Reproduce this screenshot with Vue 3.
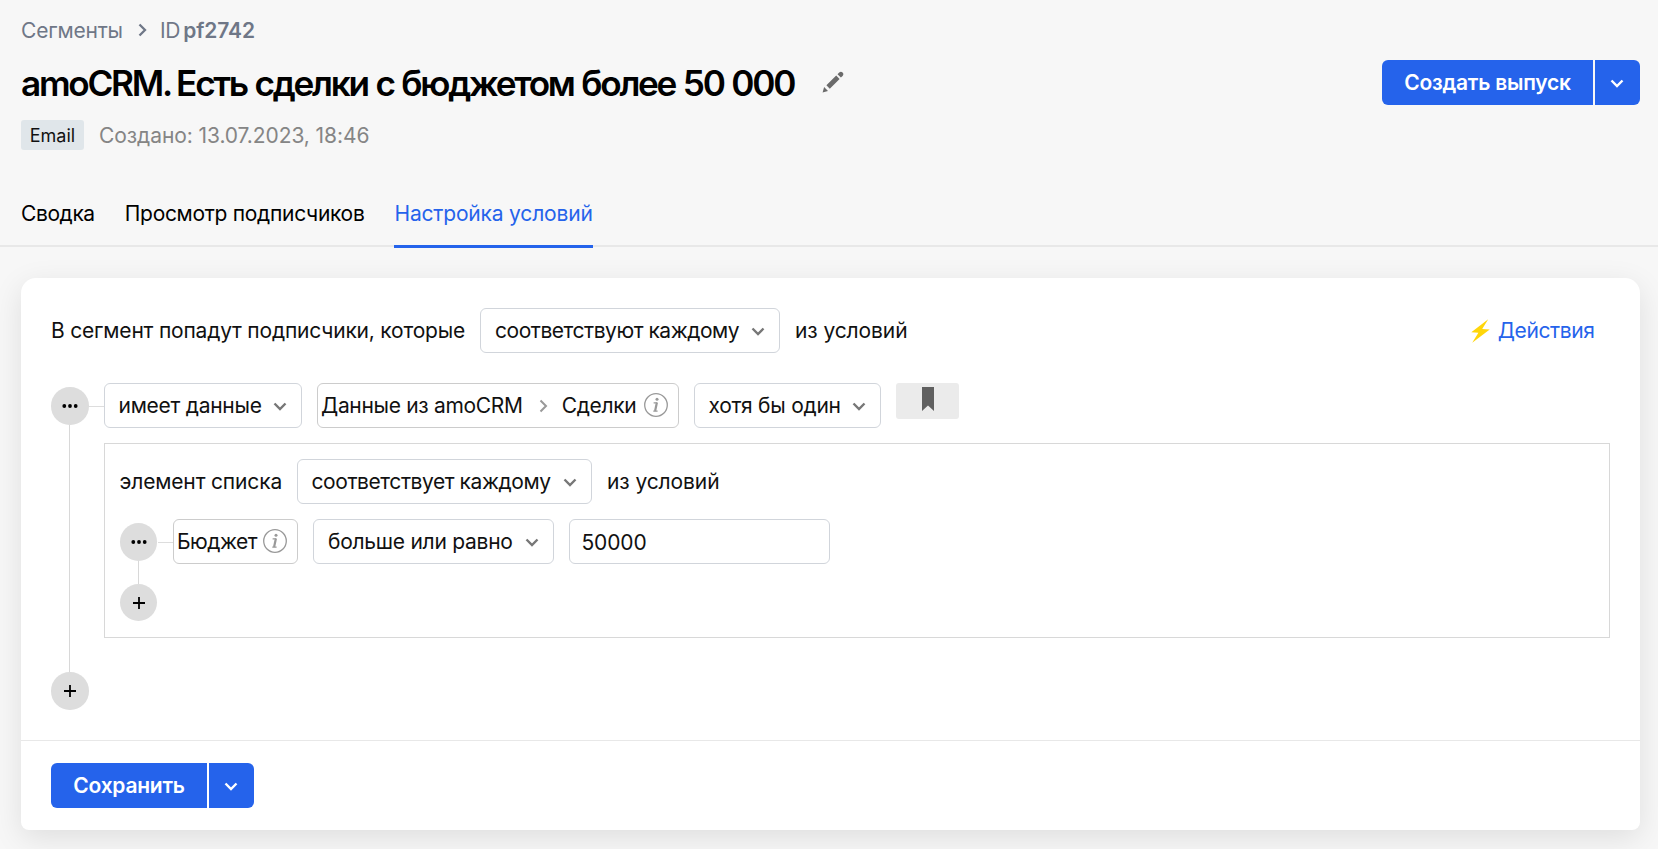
<script setup>
const tabs = [
  { label: 'Сводка', key: 'summary' },
  { label: 'Просмотр подписчиков', key: 'people' },
  { label: 'Настройка условий', key: 'active' },
]
</script>

<template>
  <div class="page">
    <header class="header">
      <div class="heading">
        <nav class="crumbs">
          <span>Сегменты</span>
          <svg class="crumb-sep" width="9" height="14" viewBox="0 0 9 14"><path d="M1.5 1.5 7 7 1.5 12.5" /></svg>
          <span class="crumb-id">ID</span><b>pf2742</b>
        </nav>
        <div class="title-row">
          <h1><span class="source">amoCRM.</span> Есть сделки с бюджетом более 50 000</h1>
          <svg class="pencil" width="22" height="22" viewBox="0 0 22 22">
            <path d="M.6 21.4 2.1 16 6 19.9ZM4.4 14.3 14.2 4.5 17.6 7.9 7.8 17.7ZM15.5 3.2 17.2 1.5Q18.9 0 20.6 1.5 22.1 3.2 20.6 4.9L18.9 6.6Z" />
          </svg>
        </div>
        <div class="meta">
          <span class="badge">Email</span>
          <span class="created">Создано: 13.07.2023, 18:46</span>
        </div>
      </div>
      <div class="split">
        <button class="main create">Создать выпуск</button>
        <button class="drop"><svg class="chev" width="14" height="9" viewBox="0 0 14 9"><path d="M1.5 1.5 7 7 12.5 1.5" /></svg></button>
      </div>
    </header>

    <nav class="tabs">
      <a v-for="t in tabs" :key="t.key" :class="['tab', t.key]">{{ t.label }}</a>
    </nav>

    <main class="card">
      <section class="body">
        <div class="row intro">
          <span class="txt t-intro">В сегмент попадут подписчики, которые</span>
          <div class="select w-match"><span>соответствуют каждому</span><svg class="chev" width="14" height="9" viewBox="0 0 14 9"><path d="M1.5 1.5 7 7 12.5 1.5" /></svg></div>
          <span class="txt">из условий</span>
          <a class="actions">
            <svg width="19" height="24" viewBox="0 0 19 24"><path d="M17.2.3.3 13.2 7.4 13.7 1.2 23.7 18.7 10.6 11.2 10.1Z" /></svg>
            <span>Действия</span>
          </a>
        </div>

        <div class="tree">
          <div class="rail">
            <span class="node"><svg width="16" height="4" viewBox="0 0 16 4"><circle cx="2.3" cy="2" r="1.9" /><circle cx="8" cy="2" r="1.9" /><circle cx="13.7" cy="2" r="1.9" /></svg></span>
            <span class="vline"></span>
            <span class="node"><svg width="12" height="12" viewBox="0 0 12 12"><path d="M0 5.1h12v1.8H0zM5.1 0h1.8v12H5.1z" /></svg></span>
          </div>
          <span class="hline"></span>
          <div class="content">
            <div class="row">
              <div class="select w-has"><span>имеет данные</span><svg class="chev" width="14" height="9" viewBox="0 0 14 9"><path d="M1.5 1.5 7 7 12.5 1.5" /></svg></div>
              <div class="path w-path">
                <span>Данные из amoCRM</span>
                <svg class="path-sep" width="9" height="14" viewBox="0 0 9 14"><path d="M1.5 1.5 7 7 1.5 12.5" /></svg>
                <span>Сделки</span>
                <svg class="info" width="24" height="24" viewBox="0 0 24 24"><circle cx="12" cy="12" r="11.3" /><path class="stem" d="M12.9 9.5 11.1 18" /><path d="M9.6 9.8H13.2M9.3 18.2H13.6" /><circle class="dot" cx="13" cy="6.3" r="1.5" /></svg>
              </div>
              <div class="select w-one"><span>хотя бы один</span><svg class="chev" width="14" height="9" viewBox="0 0 14 9"><path d="M1.5 1.5 7 7 12.5 1.5" /></svg></div>
              <button class="bookmark"><svg width="12" height="24" viewBox="0 0 12 24"><path d="M0 0H12V24L6 18.5 0 24Z" /></svg></button>
            </div>

            <div class="group">
              <div class="row">
                <span class="txt t-item">элемент списка</span>
                <div class="select w-each"><span>соответствует каждому</span><svg class="chev" width="14" height="9" viewBox="0 0 14 9"><path d="M1.5 1.5 7 7 12.5 1.5" /></svg></div>
                <span class="txt">из условий</span>
              </div>
              <div class="tree inner">
                <div class="rail">
                  <span class="node"><svg width="16" height="4" viewBox="0 0 16 4"><circle cx="2.3" cy="2" r="1.9" /><circle cx="8" cy="2" r="1.9" /><circle cx="13.7" cy="2" r="1.9" /></svg></span>
                  <span class="vline"></span>
                  <span class="node low"><svg width="12" height="12" viewBox="0 0 12 12"><path d="M0 5.1h12v1.8H0zM5.1 0h1.8v12H5.1z" /></svg></span>
                </div>
                <span class="hline"></span>
                <div class="row">
                  <div class="path w-budget">
                    <span>Бюджет</span>
                    <svg class="info" width="24" height="24" viewBox="0 0 24 24"><circle cx="12" cy="12" r="11.3" /><path class="stem" d="M12.9 9.5 11.1 18" /><path d="M9.6 9.8H13.2M9.3 18.2H13.6" /><circle class="dot" cx="13" cy="6.3" r="1.5" /></svg>
                  </div>
                  <div class="select w-gte"><span>больше или равно</span><svg class="chev" width="14" height="9" viewBox="0 0 14 9"><path d="M1.5 1.5 7 7 12.5 1.5" /></svg></div>
                  <input class="value" type="text" value="50000" />
                </div>
              </div>
            </div>
          </div>
        </div>
      </section>

      <footer class="footer">
        <div class="split">
          <button class="main save">Сохранить</button>
          <button class="drop"><svg class="chev" width="14" height="9" viewBox="0 0 14 9"><path d="M1.5 1.5 7 7 12.5 1.5" /></svg></button>
        </div>
      </footer>
    </main>
  </div>
</template>

<style>
html,
body {
  margin: 0;
  background: #f7f7f7;
}
</style>

<style scoped>
* {
  box-sizing: border-box;
}
.page {
  height: 849px;
  overflow: hidden;
  background: #f7f7f7;
  color: #111;
  font: 400 21px/30px Inter, "Liberation Sans", sans-serif;
  white-space: nowrap;
}
svg {
  display: block;
  flex: none;
}
.header {
  display: flex;
  justify-content: space-between;
  height: 186px;
  padding: 15px 18px 0 21px;
}
.crumbs {
  display: flex;
  align-items: center;
  height: 32px;
  color: #6f7787;
  letter-spacing: -0.2px;
}
.crumb-sep {
  margin: -2px 13px 0 15px;
  fill: none;
  stroke: #6f7787;
  stroke-width: 2.3;
}
.crumb-id {
  margin-right: 3px;
}
.crumbs b {
  font-weight: 600;
  letter-spacing: -0.1px;
}
.title-row {
  display: flex;
  align-items: center;
  height: 48px;
  margin-top: 12px;
}
h1 {
  margin: 0;
  color: #000;
  font-size: 35.2px;
  line-height: 48px;
  font-weight: 600;
  letter-spacing: -2.28px;
  word-spacing: 1.1px;
}
.source {
  margin-right: -2.5px;
}
.pencil {
  margin: -2px 0 0 28px;
  fill: #6b6b6b;
}
.meta {
  display: flex;
  align-items: center;
  margin-top: 13px;
}
.badge {
  width: 63px;
  height: 30px;
  border-radius: 3px;
  background: #e0e6ea;
  font-size: 18px;
  line-height: 31px;
  text-align: center;
}
.created {
  margin-left: 15px;
  line-height: 31px;
  height: 30px;
  color: #858585;
  letter-spacing: -0.08px;
}
.split {
  display: flex;
  gap: 2px;
  height: 45px;
}
.header .split {
  margin-top: 45px;
}
button {
  display: flex;
  align-items: center;
  justify-content: center;
  margin: 0;
  padding: 0;
  border: 0;
  font: inherit;
}
.main,
.drop {
  height: 45px;
  background: #2563eb;
  color: #fff;
  font-weight: 600;
}
.main {
  border-radius: 6px 0 0 6px;
  letter-spacing: -0.25px;
}
.drop {
  width: 45px;
  border-radius: 0 6px 6px 0;
}
.create {
  width: 211px;
}
.save {
  width: 156px;
}
.chev {
  fill: none;
  stroke: #777;
  stroke-width: 2.4;
}
.drop .chev {
  margin: 2px 1px 0 0;
  stroke: #fff;
}
.tabs {
  display: flex;
  gap: 30px;
  height: 61px;
  padding-left: 21px;
  border-bottom: 2px solid #e8e8e8;
  color: #000;
}
.tab {
  height: 62px;
  padding-top: 13px;
}
.summary {
  letter-spacing: -0.4px;
}
.people {
  letter-spacing: -0.3px;
}
.active {
  border-bottom: 3px solid #2563eb;
  color: #2563eb;
  letter-spacing: -0.18px;
}
.card {
  width: 1618.5px;
  height: 552px;
  margin: 31px 0 0 21px;
  border-radius: 15px 15px 8px 8px;
  background: #fff;
  box-shadow: 0 8px 30px rgba(0, 0, 0, 0.1);
}
.body {
  height: 462px;
  padding: 30px 30px 0;
}
.row {
  display: flex;
  gap: 15px;
  height: 45px;
}
.txt {
  line-height: 45px;
  letter-spacing: -0.1px;
}
.t-intro {
  width: 414px;
  letter-spacing: -0.2px;
}
.t-item {
  width: 162px;
  letter-spacing: -0.15px;
}
.select,
.path,
.value {
  display: flex;
  align-items: center;
  height: 45px;
  border: 1px solid #d1d5db;
  border-radius: 6px;
  background: #fff;
}
.select {
  justify-content: space-between;
  padding: 0 14px;
  letter-spacing: -0.26px;
}
.select .chev {
  margin-top: 2px;
}
.path {
  padding: 0 10px 0 3.5px;
  border-color: #ccc;
  letter-spacing: -0.32px;
}
.path-sep {
  margin: 0 14px 0 16px;
  fill: none;
  stroke: #999;
  stroke-width: 2;
}
.info {
  margin: -1px 0 0 auto;
  fill: none;
  stroke: #999;
  stroke-width: 1.3;
}
.info .stem {
  stroke-width: 2.2;
}
.info .dot {
  fill: #999;
  stroke: none;
}
.w-match {
  width: 300px;
  letter-spacing: -0.47px;
}
.w-has {
  width: 198px;
}
.w-path {
  width: 362px;
}
.w-one {
  width: 187px;
}
.w-each {
  width: 295.5px;
  letter-spacing: -0.43px;
}
.w-budget {
  width: 125.5px;
  letter-spacing: -0.5px;
}
.w-gte {
  width: 240.5px;
}
.value {
  width: 261px;
  padding: 2px 12px 0;
  color: #111;
  font: inherit;
  letter-spacing: -0.15px;
  outline: none;
}
.actions {
  display: flex;
  align-items: center;
  gap: 8px;
  margin: 0 15px 0 auto;
  color: #2563eb;
  letter-spacing: -0.4px;
}
.actions svg {
  fill: #ffd60a;
}
.tree {
  display: flex;
  margin-top: 30px;
}
.rail {
  display: flex;
  flex-direction: column;
  align-items: center;
  width: 37.5px;
  height: 322.5px;
  margin-top: 4px;
}
.node {
  display: flex;
  align-items: center;
  justify-content: center;
  flex: none;
  width: 37.5px;
  height: 37.5px;
  border-radius: 50%;
  background: #ddd;
}
.low svg {
  margin-top: 2px;
}
.vline {
  flex: 1;
  width: 1px;
  background: #d8d8d8;
}
.hline {
  width: 15px;
  height: 1px;
  margin-top: 23px;
  background: #ddd;
}
.content {
  flex: 1;
}
.bookmark {
  align-items: flex-start;
  width: 63px;
  height: 36px;
  padding: 4px 0 0 1px;
  border-radius: 3px;
  background: #ebebeb;
}
.bookmark svg {
  fill: #606060;
}
.group {
  height: 195px;
  margin-top: 15px;
  padding: 15px;
  border: 1px solid #d8d8d8;
}
.inner {
  margin-top: 15px;
}
.inner .rail {
  width: 38px;
  height: 98px;
}
.footer {
  height: 90px;
  padding: 22px 30px;
  border-top: 1px solid #e8e8e8;
}
</style>
